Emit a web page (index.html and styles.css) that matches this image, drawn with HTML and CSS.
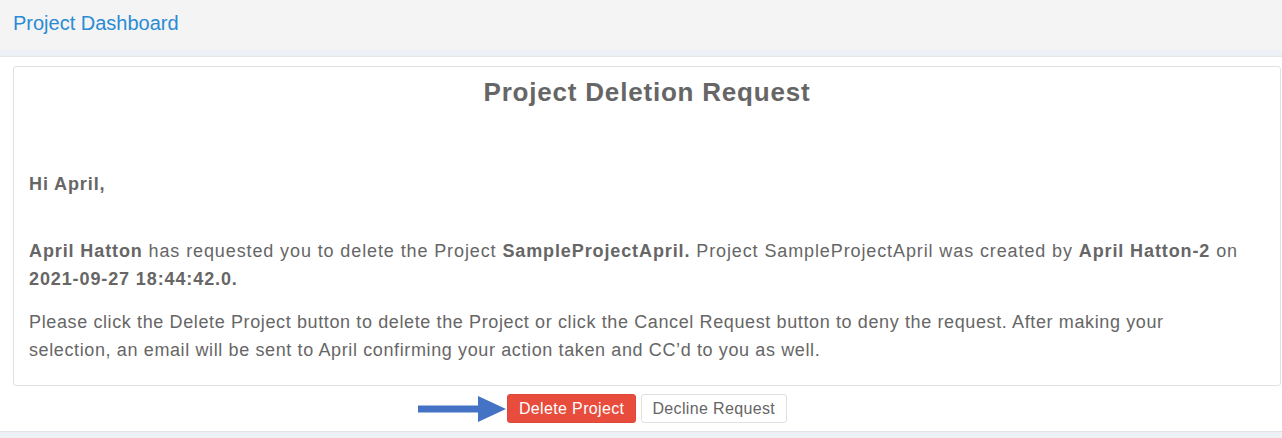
FILE: index.html
```html
<!DOCTYPE html>
<html>
<head>
<meta charset="utf-8">
<link rel="stylesheet" href="styles.css">
</head>
<body>
<header class="topbar"><a class="brand" href="#">Project Dashboard</a></header>
<div class="subbar"></div>
<main class="main">
  <section class="card">
    <h1 class="title">Project Deletion Request</h1>
    <p class="greet">Hi April,</p>
    <p class="para first"><b>April Hatton</b> has requested you to delete the Project <b>SampleProjectApril.</b> Project SampleProjectApril was created by <b>April Hatton-2</b> on <b>2021-09-27 18:44:42.0.</b></p>
    <p class="para note">Please click the Delete Project button to delete the Project or click the Cancel Request button to deny the request. After making your selection, an email will be sent to April confirming your action taken and CC’d to you as well.</p>
  </section>
  <div class="actions">
    <div class="btn-group">
      <svg class="arrow" width="89" height="28" viewBox="0 0 89 28"><path d="M0 10.5 H60 V1 L88 14 L60 27 V17.5 H0 Z" fill="#4472c4"/></svg>
      <button class="btn danger">Delete Project</button>
      <button class="btn plain">Decline Request</button>
    </div>
  </div>
</main>
<div class="footbar"></div>
</body>
</html>
```
FILE: styles.css
```css
html, body { margin: 0; padding: 0; background: #fff; }
body { font-family: "Liberation Sans", Arial, sans-serif; color: #666; width: 1282px; height: 438px; overflow: hidden; }
.topbar { height: 50px; background: #f4f4f4; padding-left: 13px; box-sizing: border-box; }
.brand { display: block; font-size: 20px; line-height: 46px; color: #2a8bd5; text-decoration: none; }
.subbar { height: 6px; background: #edf0f4; border-bottom: 1px solid #e4e6ea; }
.main { padding: 9px 1px 0 13px; height: 374px; box-sizing: border-box; }
.card { border: 1px solid #e2e2e2; border-radius: 3px; height: 320px; box-sizing: border-box; padding: 10px 30px 0 15px; box-shadow: 0 0 1px rgba(0,0,0,0.04); }
.title { margin: 0 -15px 0 0; font-size: 26px; line-height: 30px; font-weight: bold; text-align: center; color: #666; letter-spacing: 0.8px; }
.greet { margin: 63px 0 0; font-size: 18px; line-height: 28px; font-weight: bold; letter-spacing: 0.9px; }
.para { margin: 0; font-size: 18px; line-height: 28px; letter-spacing: 0.89px; }
.para.first { margin-top: 39px; }
.para.note { margin-top: 15px; letter-spacing: 0.62px; }
.para b { font-weight: bold; }
.actions { display: flex; justify-content: center; margin-top: 8px; }
.btn-group { position: relative; display: flex; align-items: center; gap: 5px; }
.arrow { position: absolute; right: 100%; top: 1px; }
.btn { font-family: "Liberation Sans", Arial, sans-serif; font-size: 16px; letter-spacing: 0.35px; height: 29px; padding: 0 10.5px; border-radius: 3px; border: 1px solid transparent; box-sizing: border-box; line-height: 27px; cursor: pointer; }
.danger { background: #e74c3c; border-color: #e0463a; color: #fff; }
.plain { background: #fff; border-color: #e0e0e0; color: #666; }
.footbar { height: 7px; background: #edf0f4; border-top: 1px solid #e0e3e8; box-sizing: border-box; }
```
